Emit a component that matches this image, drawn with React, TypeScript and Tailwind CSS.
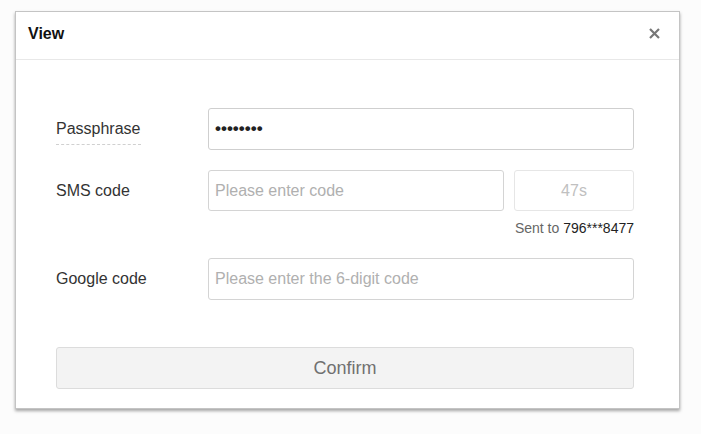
export default function App() {
  const font = { fontFamily: '"Liberation Sans", Arial, sans-serif' };
  return (
    <div className="h-[434px] w-[701px] bg-[#fcfcfc] pt-[11px] pl-[15px]" style={font}>
      <div className="flex h-[398px] w-[665px] flex-col border border-[#c4c4c4] bg-white shadow-[0_2px_3px_rgba(0,0,0,0.35)]">
        <div className="flex h-[48px] shrink-0 items-center justify-between border-b border-[#e8e8e8] pb-[4px] pl-[12px] pr-[19px]">
          <span className="text-[16px] font-bold text-[#111]">View</span>
          <svg width="11" height="11" viewBox="0 0 11 11" className="text-[#777]">
            <path d="M1 1L10 10M10 1L1 10" stroke="currentColor" strokeWidth="2.2" />
          </svg>
        </div>
        <div className="flex flex-col pt-[48px] pl-[40px] pr-[45px]">
          <div className="flex h-[42px] items-center">
            <div className="w-[152px]">
              <span className="inline-block border-b border-dashed border-[#d0d0d0] pt-[4px] pb-[3px] text-[16px] text-[#333]">
                Passphrase
              </span>
            </div>
            <div className="flex h-full flex-1 items-center rounded-[3px] border border-[#cfcfcf] px-[6px] text-[17px] font-bold text-[#222]">
              ••••••••
            </div>
          </div>
          <div className="mt-[20px] flex h-[41px] items-center">
            <div className="w-[152px] text-[16px] text-[#333]">SMS code</div>
            <div className="flex h-full w-[296px] items-center rounded-[3px] border border-[#d4d4d4] px-[6px] text-[16px] text-[#b0b0b0]">
              Please enter code
            </div>
            <div className="ml-[10px] flex h-full flex-1 items-center justify-center rounded-[3px] border border-[#e6e6e6] text-[16px] text-[#c0c0c0]">
              47s
            </div>
          </div>
          <div className="mt-[7px] text-right text-[14px] leading-[20px] text-[#666]">
            Sent to <span className="text-[#222]">796***8477</span>
          </div>
          <div className="mt-[20px] flex h-[42px] items-center">
            <div className="w-[152px] text-[16px] text-[#333]">Google code</div>
            <div className="flex h-full flex-1 items-center rounded-[3px] border border-[#d4d4d4] px-[6px] text-[16px] text-[#b0b0b0]">
              Please enter the 6-digit code
            </div>
          </div>
          <div className="mt-[47px] flex h-[42px] items-center justify-center rounded-[3px] border border-[#dcdcdc] bg-[#f3f3f3] text-[18px] text-[#707070]">
            Confirm
          </div>
        </div>
      </div>
    </div>
  );
}
